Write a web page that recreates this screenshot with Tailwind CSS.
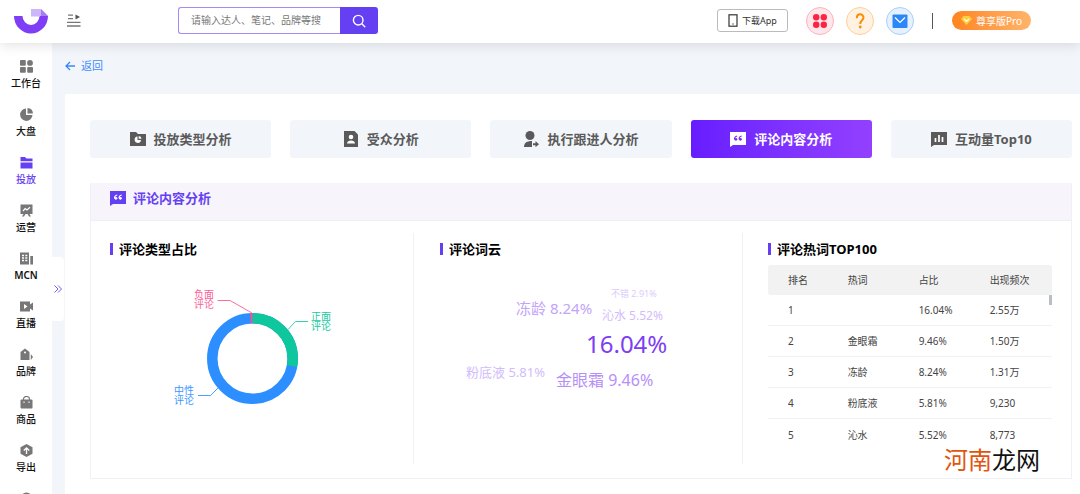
<!DOCTYPE html>
<html lang="zh-CN">
<head>
<meta charset="utf-8">
<meta name="viewport" content="width=device-width, initial-scale=1">
<title>评论内容分析</title>
<script src="https://cdn.jsdelivr.net/npm/@tailwindcss/browser@4"></script>
</head>
<body class="flex h-screen flex-col overflow-hidden bg-[#f2f6fa] font-['Noto_Sans','Noto_Sans_CJK_SC',sans-serif] text-[10px] text-[#333]">

<header class="relative z-10 flex h-[43px] shrink-0 items-center bg-white pr-[49px] pb-[2px] pl-[14px] shadow-[0_2px_12px_rgba(0,0,0,0.12)]">
  <a href="#" aria-label="首页">
    <svg class="h-[26px] w-[34px]" viewBox="0 0 34 26">
      <path d="M0 8H8.500A8.500 9 0 0 0 25.500 8H34A17 17.500 0 0 1 0 8Z" fill="#7f3df5"/>
      <path d="M17 1H27L34 8H26V8.500H17Z" fill="#cdb5fb"/>
      <path d="M27 1L34 8H27Z" fill="#a67bf8"/>
    </svg>
  </a>
  <button class="ml-[19px]" aria-label="展开菜单">
    <svg class="h-[13px] w-[14px]" viewBox="0 0 14 13" stroke="#777" stroke-width="1.300">
      <path d="M1 1.200H6M1 4.700H6M0 8.400H13.500M0 12H13.500"/><path d="M8.500 .5L13 3L8.500 5.500Z" fill="#555" stroke="none"/>
    </svg>
  </button>
  <form class="ml-[97px] flex h-[27px] w-[200px]">
    <input type="search" aria-label="搜索" placeholder="请输入达人、笔记、品牌等搜" class="w-0 flex-1 rounded-l-[3px] border border-r-0 border-[#a58af7] bg-white pl-3 text-[10px] text-[#333] outline-none placeholder:text-[#777]">
    <button type="button" aria-label="搜索" class="flex w-[38px] items-center justify-center rounded-r-[3px] bg-[#6540f3]">
      <svg class="size-[14px]" viewBox="0 0 14 14" fill="none" stroke="#fff" stroke-width="1.400" stroke-linecap="round"><circle cx="6.200" cy="6.200" r="4.800"/><path d="M9.800 9.800L12.800 12.800"/></svg>
    </button>
  </form>
  <div class="ml-auto flex items-center">
    <button class="flex h-[23px] w-[71px] items-center justify-center gap-1 rounded-[3px] border border-[#bbb] text-[9px] leading-none text-[#333]">
      <svg class="h-[13px] w-[10px]" viewBox="0 0 10 13" fill="none" stroke="#333" stroke-width="1.200"><rect x="1" y=".8" width="8" height="11.400"/><path d="M4.300 10H5.700"/></svg>下载App
    </button>
    <div class="ml-[18px] flex gap-3">
      <button aria-label="应用" class="flex size-7 items-center justify-center rounded-full border border-[#fbb3bf] bg-[#ffe6ea]">
        <svg class="size-4" viewBox="0 0 16 16" fill="#fb2442"><circle cx="4.200" cy="4.200" r="3.200"/><circle cx="11.800" cy="4.200" r="3.200"/><circle cx="4.200" cy="11.800" r="3.200"/><circle cx="11.800" cy="11.800" r="3.200"/></svg>
      </button>
      <button aria-label="帮助" class="flex size-7 items-center justify-center rounded-full border border-[#fcd09a] bg-[#fff2e2]">
        <svg class="size-4" viewBox="0 0 16 16" fill="none" stroke="#fb8c05" stroke-width="2"><path d="M4.800 5.200C4.800 0 11.500 .3 11.500 4.600C11.500 7.300 8.200 7.200 8.200 11"/><circle cx="8.200" cy="14" r=".7" stroke-width="1.400" fill="#fb8c05"/></svg>
      </button>
      <button aria-label="消息" class="flex size-7 items-center justify-center rounded-full border border-[#a9cffb] bg-[#e6f1ff]">
        <svg class="size-4" viewBox="0 0 16 16"><rect x=".5" y="1.500" width="15" height="13.500" rx="1" fill="#2b87f8"/><path d="M3 4.500L8 9.500L13 4.500" fill="none" stroke="#fff" stroke-width="1.200"/></svg>
      </button>
    </div>
    <span class="ml-[18px] h-4 w-px bg-[#555]"></span>
    <button class="ml-[19px] flex h-[19px] w-[79px] items-center justify-center gap-1 rounded-full bg-linear-to-r from-[#ff841c] to-[#ffb469] text-[10px] leading-none text-white">
      <svg class="h-[9px] w-[11px]" viewBox="0 0 11 9"><path d="M2.500 0H8.500L11 3L5.500 9L0 3Z" fill="#ffcf3c"/><path d="M3 3L5.500 5.500L8 3" fill="none" stroke="#fff" stroke-width="1.200"/></svg>尊享版Pro
    </button>
  </div>
</header>

<div class="flex min-h-0 flex-1">
  <aside class="relative w-[52px] shrink-0 bg-white">
    <nav class="flex h-full flex-col gap-[18px] overflow-hidden pt-[17px] text-center leading-[14px] font-medium text-[#111]">
      <a href="#" class="flex shrink-0 flex-col items-center gap-[3px]"><svg class="size-[13px]" viewBox="0 0 13 13" fill="#777"><rect width="5.800" height="5.800" rx="1"/><circle cx="10" cy="2.900" r="2.900"/><rect y="7" width="5.800" height="5.800" rx="1"/><rect x="7.200" y="7" width="5.800" height="5.800" rx="1"/></svg>工作台</a>
      <a href="#" class="flex shrink-0 flex-col items-center gap-[3px]"><svg class="size-[13px]" viewBox="0 0 13 13" fill="#777"><path d="M6 .5V7H12.500A6.200 6.200 0 1 1 6 .5Z"/><path d="M7.500 0A6 6 0 0 1 13 5.500H7.500Z"/></svg>大盘</a>
      <a href="#" aria-current="page" class="flex shrink-0 flex-col items-center gap-[3px] text-[#6540f3]"><svg class="size-[13px]" viewBox="0 0 13 13" fill="#6540f3"><path d="M.5 1H5L6.500 2.500H12.500V5.300H.5Z"/><path d="M.5 6.500H12.500V12.500H.5Z"/></svg>投放</a>
      <a href="#" class="flex shrink-0 flex-col items-center gap-[3px]"><svg class="size-[13px]" viewBox="0 0 13 13"><path d="M.5 .5H12.500V10H9.500L11 12.500H9L7.500 10H5.500L4 12.500H2L3.500 10H.5Z" fill="#777"/><path d="M3 7L5.200 4.500L7 6L10 3.300" fill="none" stroke="#fff" stroke-width="1.200"/></svg>运营</a>
      <a href="#" class="flex shrink-0 flex-col items-center gap-[3px] font-semibold"><svg class="size-[13px]" viewBox="0 0 13 13"><path d="M0 .5H9V12.500H0ZM10.300 4H13V12.500H10.300Z" fill="#777"/><path d="M2 3.500H4M5.300 3.500H7.300M2 6H4M5.300 6H7.300M2 8.500H4M5.300 8.500H7.300" stroke="#fff" stroke-width="1.300"/></svg>MCN</a>
      <a href="#" class="flex shrink-0 flex-col items-center gap-[3px]"><svg class="size-[13px]" viewBox="0 0 13 13"><path d="M0 1.500H10V4.500L13 2.500V10.500L10 8.500V11.500H0Z" fill="#777"/><path d="M4 4L7.500 6.500L4 9Z" fill="#fff"/></svg>直播</a>
      <a href="#" class="flex shrink-0 flex-col items-center gap-[3px]"><svg class="size-[13px]" viewBox="0 0 13 13" fill="#777"><path d="M5 .5L9.500 4V12H.5V4Z"/><path d="M10.800 6L13 9L10.800 12Z"/><circle cx="5" cy="4.500" r="1" fill="#fff"/></svg>品牌</a>
      <a href="#" class="flex shrink-0 flex-col items-center gap-[3px]"><svg class="size-[13px]" viewBox="0 0 13 13"><rect x=".5" y="3.500" width="12" height="9" rx="1" fill="#777"/><path d="M3.500 4V3A3 2.500 0 0 1 9.500 3V4" fill="none" stroke="#777" stroke-width="1.200"/><path d="M4 5.500V7M9 5.500V7" stroke="#fff"/></svg>商品</a>
      <a href="#" class="flex shrink-0 flex-col items-center gap-[3px]"><svg class="size-[13px]" viewBox="0 0 13 13"><path d="M6.500 0L12.500 3.300V9.700L6.500 13L.5 9.700V3.300Z" fill="#777"/><path d="M6.500 10V4M3.800 6.500L6.500 3.800L9.200 6.500" fill="none" stroke="#fff" stroke-width="1.300"/></svg>导出</a>
      <a href="#" aria-label="更多" class="flex shrink-0 flex-col items-center"><svg class="size-[13px]" viewBox="0 0 13 13" fill="#777"><circle cx="6.500" cy="6.500" r="6"/></svg></a>
    </nav>
    <button aria-label="展开侧栏" class="absolute top-[214px] left-full flex h-16 w-3 items-center justify-center rounded-r-sm bg-white">
      <svg class="h-[8px] w-[8px]" viewBox="0 0 8 8" fill="none" stroke="#7a58f5"><path d="M.5 .5L4 4L.5 7.500M4 .5L7.500 4L4 7.500"/></svg>
    </button>
  </aside>

  <main class="flex min-w-0 flex-1 flex-col pl-[13px]">
    <a href="#" class="flex h-[46px] shrink-0 items-center gap-[6px] self-start text-[11px] text-[#3f8cff]">
      <svg class="size-[10px]" viewBox="0 0 10 10" fill="none" stroke="#3a86f8" stroke-width="1.300"><path d="M10 5H1M5 1L1 5L5 9"/></svg>返回
    </a>
    <div class="mt-[5px] flex-1 rounded-tl-[3px] bg-white pt-[26px] pr-2 pl-[25px]">
      <div class="grid grid-cols-5 gap-[19px] text-[13px] leading-5 font-bold text-[#5a5a5a]">
        <button class="flex h-[38px] items-center justify-center gap-2 rounded-[3px] bg-[#f2f6fa]">
          <svg class="size-4" viewBox="0 0 16 16"><path d="M0 1H6L8 3H16V15H0Z" fill="#5a5a5a"/><path d="M7.500 5.500V9H11A3.200 3.200 0 1 1 7.500 5.500Z" fill="#fff"/><path d="M8.700 5A3.200 3.200 0 0 1 11.500 7.800H8.700Z" fill="#fff"/></svg>投放类型分析</button>
        <button class="flex h-[38px] items-center justify-center gap-2 rounded-[3px] bg-[#f2f6fa]">
          <svg class="size-4" viewBox="0 0 16 16"><path d="M1 0H11.500L15 3.500V16H1Z" fill="#5a5a5a"/><circle cx="8" cy="6" r="2.300" fill="#fff"/><path d="M4 12.500C4 8.500 12 8.500 12 12.500Z" fill="#fff"/></svg>受众分析</button>
        <button class="flex h-[38px] items-center justify-center gap-2 rounded-[3px] bg-[#f2f6fa]">
          <svg class="size-4" viewBox="0 0 16 16" fill="#5a5a5a"><circle cx="7" cy="4.500" r="4.500"/><path d="M1 16C1 12 3.500 10 9 10V16Z"/><path d="M10 12.300H12.500V10L16 13.200L12.500 16.200V14.200H10Z"/></svg>执行跟进人分析</button>
        <button aria-pressed="true" class="flex h-[38px] items-center justify-center gap-2 rounded-[3px] bg-linear-to-r from-[#671cff] to-[#933fff] text-white">
          <svg class="size-4" viewBox="0 0 16 16"><path d="M0 1H16V14H3L0 16Z" fill="#fff"/><path d="M7.200 5Q4.500 5.500 4.500 8.200" fill="none" stroke="#7a2aff" stroke-width="1.100"/><circle cx="5.900" cy="8.300" r="1.400" fill="#7a2aff"/><path d="M11.700 5Q9 5.500 9 8.200" fill="none" stroke="#7a2aff" stroke-width="1.100"/><circle cx="10.400" cy="8.300" r="1.400" fill="#7a2aff"/></svg>评论内容分析</button>
        <button class="flex h-[38px] items-center justify-center gap-2 rounded-[3px] bg-[#f2f6fa]">
          <svg class="size-4" viewBox="0 0 16 16"><path d="M0 1H16V14H3L0 16Z" fill="#5a5a5a"/><path d="M4.500 7V11M8 4V11M11.500 6V11" stroke="#fff" stroke-width="1.700"/></svg>互动量Top10</button>
      </div>

      <section class="mt-[25px] border border-t-0 border-[#f0f1f6]">
        <h1 class="flex h-[38px] items-center gap-[7px] border-b border-[#eeeef5] bg-[#f7f4fc] px-[19px] pb-[7px] text-[13px] leading-5 font-bold text-[#6540f3]">
          <svg class="size-4" viewBox="0 0 16 16"><path d="M0 1H16V14H3L0 16Z" fill="#6540f3"/><path d="M7.200 5Q4.500 5.500 4.500 8.200" fill="none" stroke="#fff" stroke-width="1.100"/><circle cx="5.900" cy="8.300" r="1.400" fill="#fff"/><path d="M11.700 5Q9 5.500 9 8.200" fill="none" stroke="#fff" stroke-width="1.100"/><circle cx="10.400" cy="8.300" r="1.400" fill="#fff"/></svg>评论内容分析</h1>
        <div class="grid grid-cols-[304fr_329fr_309fr] px-[19px] pt-3 pb-[14px]">
          <div class="border-r border-[#f0f1f5] pt-[6px]">
            <h2 class="flex items-center gap-[6px] text-[13px] leading-5 font-bold text-black"><span class="h-3 w-[3px] bg-[#6540f3]"></span>评论类型占比</h2>
            <svg class="mt-[6px] h-[199px] w-[283px]" viewBox="0 0 283 199" fill="none" font-size="10" role="img" aria-label="评论类型占比环形图">
              <g transform="rotate(-90 142.500 93.500)" stroke-width="10.500">
                <circle cx="142.500" cy="93.500" r="40.200" stroke="#2c8eff"/>
                <circle cx="142.500" cy="93.500" r="40.200" stroke="#0fc79c" pathLength="100" stroke-dasharray="28 72"/>
                <circle cx="142.500" cy="93.500" r="40.200" stroke="#f1568c" pathLength="100" stroke-dasharray="0.800 99.200" stroke-dashoffset="0.800"/>
              </g>
              <path d="M107.500 35.500H120L142 48" stroke="#fa6fa3"/>
              <path d="M178 64.500L185.500 56.500H198" stroke="#3bcfae"/>
              <path d="M88 130.500H100.500L108 123" stroke="#4da0ff"/>
              <g fill="#fa5f98"><text x="84" y="33">负面</text><text x="84" y="43">评论</text></g>
              <g fill="#18c99f"><text x="201" y="55">正面</text><text x="201" y="65">评论</text></g>
              <g fill="#3c97ff"><text x="64" y="129">中性</text><text x="64" y="139">评论</text></g>
            </svg>
          </div>
          <div class="border-r border-[#f0f1f5] pt-[6px] pl-[26px]">
            <h2 class="flex items-center gap-[6px] text-[13px] leading-5 font-bold text-black"><span class="h-3 w-[3px] bg-[#6540f3]"></span>评论词云</h2>
            <svg class="mt-[6px] h-[199px] w-[300px]" viewBox="0 0 300 199" role="img" aria-label="评论词云">
              <text x="171" y="32" font-size="9" fill="#dccbfa">不错 2.91%</text>
              <text x="76" y="49" font-size="15" fill="#c3a4fa">冻龄 8.24%</text>
              <text x="162" y="55" font-size="12" fill="#d2bcfb">沁水 5.52%</text>
              <text x="146" y="88" font-size="24" fill="#7d3df3">16.04%</text>
              <text x="26" y="112" font-size="13" fill="#d2bcfb">粉底液 5.81%</text>
              <text x="116" y="121" font-size="16" fill="#b68ff9">金眼霜 9.46%</text>
            </svg>
          </div>
          <div class="pt-[6px] pl-[25px]">
            <h2 class="flex items-center gap-[6px] text-[13px] leading-5 font-bold text-black"><span class="h-3 w-[3px] bg-[#6540f3]"></span>评论热词TOP100</h2>
            <div class="relative mt-[6px]">
              <table class="w-full table-fixed border-separate border-spacing-0 text-left leading-[14px] text-[#444] [&_tbody_tr:not(:last-child)_td]:border-b [&_td]:border-[#f0f1f3]">
                <colgroup><col class="w-[21%]"><col class="w-[25%]"><col class="w-[25%]"><col class="w-[29%]"></colgroup>
                <thead>
                  <tr class="h-[30px] bg-[#f2f2f2]"><th class="rounded-l-[3px] pl-5 font-normal">排名</th><th class="pl-5 font-normal">热词</th><th class="pl-5 font-normal">占比</th><th class="rounded-r-[3px] pl-5 font-normal">出现频次</th></tr>
                </thead>
                <tbody>
                  <tr class="h-[31px]"><td class="pl-5">1</td><td class="pl-5"></td><td class="pl-5">16.04%</td><td class="pl-5">2.55万</td></tr>
                  <tr class="h-[31px]"><td class="pl-5">2</td><td class="pl-5">金眼霜</td><td class="pl-5">9.46%</td><td class="pl-5">1.50万</td></tr>
                  <tr class="h-[31px]"><td class="pl-5">3</td><td class="pl-5">冻龄</td><td class="pl-5">8.24%</td><td class="pl-5">1.31万</td></tr>
                  <tr class="h-[31px]"><td class="pl-5">4</td><td class="pl-5">粉底液</td><td class="pl-5">5.81%</td><td class="pl-5">9,230</td></tr>
                  <tr class="h-[31px]"><td class="pl-5">5</td><td class="pl-5">沁水</td><td class="pl-5">5.52%</td><td class="pl-5">8,773</td></tr>
                </tbody>
              </table>
              <span class="absolute top-[30px] right-0 h-[10px] w-[3px] bg-[#b9bec4]"></span>
            </div>
          </div>
        </div>
      </section>
    </div>
  </main>
</div>

<div class="absolute right-10 bottom-[18px] z-20 text-[24px] leading-8 text-[#111]"><span class="text-[#e0560f]">河南</span>龙网</div>
</body>
</html>
